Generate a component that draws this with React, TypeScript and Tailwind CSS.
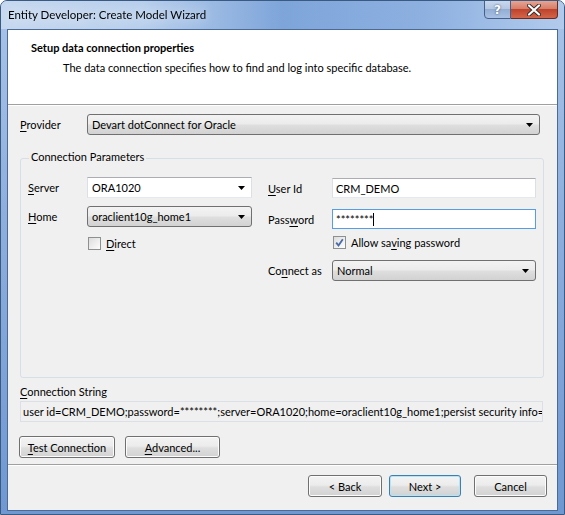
import React from 'react'

const FONT = "font-['Lato',sans-serif] text-[11px] text-black leading-none"
const GRAD = 'bg-[linear-gradient(#f3f3f3_0%,#ececec_45%,#dedede_55%,#d2d2d2_100%)]'

function Arrow() {
  return (
    <svg width="7" height="4" viewBox="0 0 7 4" className="shrink-0">
      <path d="M0 0h7L3.5 4z" fill="#000" />
    </svg>
  )
}

function DropList({ value, className }: { value: string; className: string }) {
  return (
    <div
      className={`flex items-center justify-between h-[21px] pl-[4px] pr-[6px] border border-[#707070] rounded-[3px] ${GRAD} ${className}`}
    >
      <span>{value}</span>
      <Arrow />
    </div>
  )
}

function EditCombo({ value, className }: { value: string; className: string }) {
  return (
    <div
      className={`flex items-center justify-between h-[21px] pl-[4px] pr-[6px] bg-white border border-[#dbdfe6] border-t-[#abadb3] border-b-[#e3e9ef] ${className}`}
    >
      <span>{value}</span>
      <Arrow />
    </div>
  )
}

function TextBox({ value, focused, className }: { value: string; focused?: boolean; className: string }) {
  return (
    <div
      className={`flex items-center h-[20px] pl-[3px] bg-white border ${
        focused ? 'border-[#569de5]' : 'border-[#dbdfe6] border-t-[#abadb3] border-b-[#e3e9ef]'
      } ${className}`}
    >
      <span>{value}</span>
      {focused && <span className="w-px h-[13px] bg-black" />}
    </div>
  )
}

function CheckBox({ checked, label }: { checked?: boolean; label: [string, string, string] }) {
  return (
    <div className="flex items-center gap-[5px]">
      <div className="w-[13px] h-[13px] border border-[#8e8f8f] bg-[linear-gradient(135deg,#dcdcdc,#fdfdfd)] flex items-center justify-center">
        {checked && (
          <svg width="9" height="9" viewBox="0 0 9 9">
            <path d="M1.2 4.6l2.3 2.8L7.8 1.2" stroke="#4a6aa8" strokeWidth="1.8" fill="none" />
          </svg>
        )}
      </div>
      <span>
        {label[0]}
        <span className="underline underline-offset-2">{label[1]}</span>
        {label[2]}
      </span>
    </div>
  )
}

function Btn({ children, className, primary }: { children: React.ReactNode; className: string; primary?: boolean }) {
  return (
    <div
      className={`flex items-center justify-center h-[22px] rounded-[3px] border ${
        primary
          ? 'border-[#3c7fb1] shadow-[inset_0_0_0_1px_#b6e4f7]'
          : 'border-[#707070] shadow-[inset_0_0_0_1px_#fcfcfc]'
      } ${GRAD} ${className}`}
    >
      {children}
    </div>
  )
}

function U({ children }: { children: React.ReactNode }) {
  return <span className="underline underline-offset-2">{children}</span>
}

export default function App() {
  return (
    <div className={`${FONT} w-[565px] h-[515px] bg-white`}>
      <div className="w-[565px] h-[515px] rounded-t-[7px] border border-[#3b5a82] bg-[linear-gradient(180deg,#a9c4e8_0%,#8fb0de_40%,#6f98d2_100%)] flex flex-col overflow-hidden">
        {/* title bar */}
        <div className="relative h-[28px] shrink-0 flex items-center pl-[7px] bg-[linear-gradient(90deg,#c6d8ef_0%,#b8cfec_25%,#7ea5da_50%,#8db0e0_75%,#b2cbec_100%)]">
          <span className="text-[11.5px] drop-shadow-[0_0_6px_#ffffff]">Entity Developer: Create Model Wizard</span>
          <div className="absolute right-[6px] top-[-1px] flex">
            <div className="w-[27px] h-[19px] rounded-bl-[4px] border border-[#47608a] bg-[linear-gradient(#c9d8ec_0%,#b1c5e2_50%,#94add3_50%,#a8c1e4_100%)] flex items-center justify-center">
              <span className="font-['DejaVu_Sans',sans-serif] font-bold text-[12px] text-white [text-shadow:0_0_2px_#2d3f5c]">?</span>
            </div>
            <div className="w-[47px] h-[19px] rounded-br-[4px] border border-l-0 border-[#6b2a22] bg-[linear-gradient(#e8a493_0%,#d47a64_50%,#c0432c_50%,#d2664a_100%)] flex items-center justify-center">
              <svg width="14" height="12" viewBox="0 0 14 12">
                <path d="M2 1.5l10 9M12 1.5l-10 9" stroke="#3a2a2a" strokeWidth="4" strokeLinecap="round" />
                <path d="M2 1.5l10 9M12 1.5l-10 9" stroke="#fff" strokeWidth="2.2" strokeLinecap="round" />
              </svg>
            </div>
          </div>
        </div>

        {/* client area */}
        <div className="mx-[6px] mb-[3px] flex-1 border border-[#4b6a96] flex flex-col bg-[#f0f0f0]">
          {/* header */}
          <div className="h-[75px] shrink-0 bg-white border-b border-[#a0a0a0] pt-[10px]">
            <div className="pl-[23px] font-bold h-[14px] flex items-center">Setup data connection properties</div>
            <div className="pl-[55px] mt-[6px] h-[14px] flex items-center">
              The data connection specifies how to find and log into specific database.
            </div>
          </div>
          <div className="h-px bg-white shrink-0" />

          {/* body */}
          <div className="flex-1 px-[12px] pt-[8px]">
            <div className="flex items-center">
              <span className="w-[67px]">
                <U>P</U>rovider
              </span>
              <DropList value="Devart dotConnect for Oracle" className="w-[453px]" />
            </div>

            <fieldset className="mt-[16px] w-[523px] h-[227px] border border-[#d5dfe5] rounded-[3px] px-[7px]">
              <legend className="ml-[1px] px-[2px] h-[14px]">Connection Parameters</legend>
              <div className="flex items-start mt-[12px]">
                <div className="w-[240px] flex flex-col">
                  <div className="flex items-center">
                    <span className="w-[59px]">
                      <U>S</U>erver
                    </span>
                    <EditCombo value="ORA1020" className="w-[165px]" />
                  </div>
                  <div className="flex items-center mt-[8px]">
                    <span className="w-[59px]">
                      <U>H</U>ome
                    </span>
                    <DropList value="oraclient10g_home1" className="w-[165px]" />
                  </div>
                  <div className="mt-[10px] pl-[60px]">
                    <CheckBox label={['', 'D', 'irect']} />
                  </div>
                </div>
                <div className="flex flex-col mt-[1px]">
                  <div className="flex items-center">
                    <span className="w-[64px]">
                      <U>U</U>ser Id
                    </span>
                    <TextBox value="CRM_DEMO" className="w-[204px]" />
                  </div>
                  <div className="flex items-center mt-[11px]">
                    <span className="w-[64px]">
                      Pass<U>w</U>ord
                    </span>
                    <TextBox value="********" focused className="w-[204px]" />
                  </div>
                  <div className="mt-[7px] pl-[65px]">
                    <CheckBox checked label={['Allow sa', 'v', 'ing password']} />
                  </div>
                  <div className="flex items-center mt-[11px]">
                    <span className="w-[64px]">
                      Co<U>n</U>nect as
                    </span>
                    <DropList value="Normal" className="w-[204px]" />
                  </div>
                </div>
              </div>
            </fieldset>

            <div className="mt-[8px]">
              <U>C</U>onnection String
            </div>
            <div className="mt-[4px] w-[523px] h-[21px] border border-[#dbdfe6] flex items-center pl-[2px] overflow-hidden whitespace-nowrap">
              user id=CRM_DEMO;password=********;server=ORA1020;home=oraclient10g_home1;persist security info=True
            </div>

            <div className="flex gap-[10px] mt-[14px] -ml-[1px]">
              <Btn className="w-[96px]">
                <span>
                  <U>T</U>est Connection
                </span>
              </Btn>
              <Btn className="w-[95px]">
                <span>
                  <U>A</U>dvanced...
                </span>
              </Btn>
            </div>
          </div>

          {/* footer */}
          <div className="h-[46px] shrink-0 border-t border-[#a0a0a0] shadow-[inset_0_1px_0_#ffffff] flex items-start justify-end pt-[10px] pr-[10px] gap-[6px]">
            <Btn className="w-[74px] h-[21px]">&lt; Back</Btn>
            <Btn primary className="w-[72px] h-[21px] ml-[1px] mr-[7px]">
              Next &gt;
            </Btn>
            <Btn className="w-[73px] h-[21px]">Cancel</Btn>
          </div>
        </div>
      </div>
    </div>
  )
}
